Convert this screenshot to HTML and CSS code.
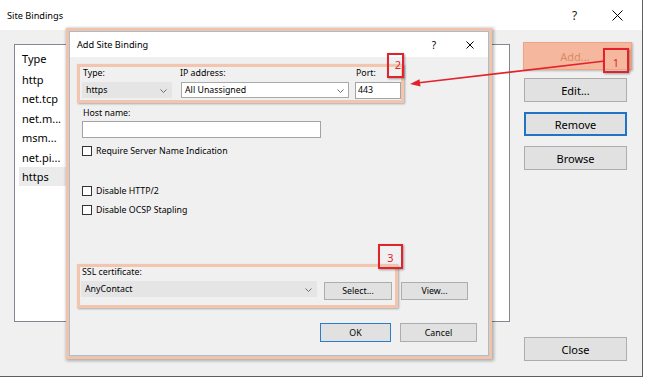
FILE: index.html
```html
<!DOCTYPE html>
<html>
<head>
<meta charset="utf-8">
<title>Site Bindings</title>
<link rel="stylesheet" href="styles.css">
</head>
<body>
<div class="screen">
  <div class="win">
    <div class="titlebar">
      <span class="title">Site Bindings</span>
      <span class="cap cap-help">?</span>
      <span class="cap cap-close"><svg width="11" height="11" viewBox="0 0 11 11"><path d="M0.5 0.5 L10.5 10.5 M10.5 0.5 L0.5 10.5" stroke="#000" stroke-width="1" fill="none"/></svg></span>
    </div>
    <div class="win-body">
      <div class="list">
        <div class="col">
          <div class="row head">Type</div>
          <div class="row">http</div>
          <div class="row">net.tcp</div>
          <div class="row">net.m...</div>
          <div class="row">msm...</div>
          <div class="row">net.pi...</div>
          <div class="row sel">https</div>
        </div>
      </div>
      <div class="btn-col">
        <button class="btn add">Add...</button>
        <button class="btn">Edit...</button>
        <button class="btn focus">Remove</button>
        <button class="btn">Browse</button>
        <button class="btn close">Close</button>
      </div>
    </div>
  </div>

  <div class="dialog">
    <div class="dlg-inner">
      <div class="dlg-title">
        <span class="title">Add Site Binding</span>
        <span class="dcap">?</span>
        <span class="dcap"><svg width="8" height="8" viewBox="0 0 8 8"><path d="M0.5 0.5 L7.5 7.5 M7.5 0.5 L0.5 7.5" stroke="#000" stroke-width="1" fill="none"/></svg></span>
      </div>
      <div class="dlg-body">
        <div class="hl hl-bind">
          <div class="field f-type">
            <div class="lbl">Type:</div>
            <div class="combo gray">https<svg class="chev" width="7" height="4" viewBox="0 0 7 4"><path d="M0.5 0.5 L3.5 3.5 L6.5 0.5" stroke="#6d6d6d" fill="none"/></svg></div>
          </div>
          <div class="field f-ip">
            <div class="lbl">IP address:</div>
            <div class="combo white">All Unassigned<svg class="chev" width="7" height="4" viewBox="0 0 7 4"><path d="M0.5 0.5 L3.5 3.5 L6.5 0.5" stroke="#6d6d6d" fill="none"/></svg></div>
          </div>
          <div class="field f-port">
            <div class="lbl">Port:</div>
            <div class="textbox port">443</div>
          </div>
        </div>

        <div class="lbl host-lbl">Host name:</div>
        <div class="textbox host"></div>

        <div class="check sni"><span class="box"></span><span>Require Server Name Indication</span></div>
        <div class="check http2"><span class="box"></span><span>Disable HTTP/2</span></div>
        <div class="check ocsp"><span class="box"></span><span>Disable OCSP Stapling</span></div>

        <div class="ssl-row">
          <div class="hl hl-ssl">
            <div class="lbl ssl-lbl">SSL certificate:</div>
            <div class="ssl-fields">
              <div class="combo gray cert">AnyContact<svg class="chev" width="7" height="4" viewBox="0 0 7 4"><path d="M0.5 0.5 L3.5 3.5 L6.5 0.5" stroke="#6d6d6d" fill="none"/></svg></div>
              <button class="btn sm select">Select...</button>
            </div>
          </div>
          <button class="btn sm view">View...</button>
        </div>

        <div class="dlg-actions">
          <button class="btn sm ok">OK</button>
          <button class="btn sm cancel">Cancel</button>
        </div>
      </div>
    </div>
  </div>

  <svg class="arrow" width="645" height="378" viewBox="0 0 645 378">
    <line x1="605" y1="61" x2="419" y2="82.8" stroke="#e2232b" stroke-width="1.6"/>
    <polygon points="410,84 420.5,86.6 419.5,79.2" fill="#e2232b"/>
  </svg>

  <div class="mark m1">1</div>
  <div class="mark m2">2</div>
  <div class="mark m3">3</div>
</div>
</body>
</html>
```

FILE: styles.css
```css
* { box-sizing: border-box; }
html, body { margin: 0; padding: 0; background: #fff; }
body { font-family: "Noto Sans", "Open Sans", sans-serif; color: #000; }

.screen { position: relative; width: 645px; height: 378px; overflow: hidden; background: #fff; }

/* outer window */
.win {
  width: 643px; height: 377px;
  border-right: 1px solid #5f5f5f; border-bottom: 1px solid #5f5f5f;
  background: #f0f0f0;
  display: flex; flex-direction: column;
}
.titlebar {
  height: 30px; flex: none; background: #fff;
  display: flex; align-items: center;
  padding: 0 3px 0 7px;
  font-size: 9.2px;
}
.titlebar .title { flex: 1; }
.cap { width: 43px; display: flex; justify-content: center; align-items: center; }
.cap-help { font-size: 12px; color: #222; }

.win-body { flex: 1; display: flex; padding: 14px 0 15px 14px; }
.list {
  width: 496px; height: 278px; flex: none;
  background: #fff; border: 1px solid #828790;
  padding: 2px 0 0 4px;
}
.col { width: 49px; }
.row { height: 19.4px; line-height: 19.4px; padding-left: 3px; font-size: 11px; white-space: nowrap; }
.row.head { height: 23px; line-height: 23px; }
.row.sel { background: #ebebeb; }

.btn-col { width: 103px; margin-left: 14px; display: flex; flex-direction: column; }
.btn {
  font-family: inherit; color: #000;
  background: #e1e1e1; border: 1px solid #adadad;
  padding: 0; margin: 0;
  display: flex; align-items: center; justify-content: center;
}
.btn-col .btn { height: 24px; width: 103px; font-size: 11px; margin-bottom: 10px; }
.btn-col .btn.add {
  width: 109px; height: 28px; margin: -2px 0 8px -1px;
  background: #f5b89e; border: 1px solid #eea487; color: #dc8a63;
  padding-right: 5px;
  box-shadow: 1px 1px 2px rgba(0,0,0,0.25);
}
.btn-col .btn.focus { border: 2px solid #1f74c6; }
.btn-col .btn.close { margin-top: auto; margin-bottom: 0; }

/* dialog */
.dialog {
  position: absolute; left: 66px; top: 28px;
  width: 426px; height: 331px;
  border: 3px solid #f2c3ab;
  box-shadow: 1px 1px 3px 1px rgba(0,0,0,0.28);
}
.dlg-inner {
  height: 100%; border: 1px solid #a8bdd3; background: #f0f0f0;
  display: flex; flex-direction: column;
}
.dlg-title {
  height: 25px; flex: none; background: #fff;
  display: flex; align-items: center;
  padding-left: 7px; font-size: 9.2px;
}
.dlg-title .title { flex: 1; }
.dcap { width: 36px; display: flex; justify-content: center; align-items: center; font-size: 10px; }

.dlg-body { flex: 1; display: flex; flex-direction: column; align-items: flex-start; font-size: 8.8px; }

.lbl { line-height: 12px; height: 12px; padding-left: 1px; white-space: nowrap; }

.hl {
  border: 3px solid #f3c5ae;
  box-shadow: 1px 1px 2px rgba(0,0,0,0.3);
}
.hl-bind { margin: 7px 0 0 7px; width: 327px; padding: 0 0 1px 2px; display: flex; }
.field { display: flex; flex-direction: column; }
.field .combo, .field .textbox { margin-top: 3px; }
.f-type { width: 90px; }
.f-ip { width: 168px; margin-left: 9px; }
.f-ip .lbl { padding-left: 0; margin-left: -1px; }
.f-port { width: 46px; margin-left: 6px; }

.combo {
  position: relative; height: 16px; line-height: 14px;
  padding-left: 3px; border: 1px solid #e5e5e5; white-space: nowrap;
}
.combo.gray { background: #e5e5e5; }
.combo.white { background: #fff; border-color: #a9a9a9; }
.chev { position: absolute; right: 4px; top: 6px; }

.textbox { height: 17px; line-height: 15px; padding-left: 2px; background: #fff; border: 1px solid #a3a3a3; }

.host-lbl { margin: 4px 0 0 12px; }
.host { width: 239px; margin: 2px 0 0 12px; }

.check { display: flex; align-items: center; height: 10px; margin-left: 12px; white-space: nowrap; }
.check .box { width: 10px; height: 10px; border: 1px solid #333; background: #fff; margin-right: 4px; flex: none; }
.sni { margin-top: 8px; }
.http2 { margin-top: 30px; }
.ocsp { margin-top: 9px; }

.ssl-row { display: flex; align-items: flex-start; margin: 49px 0 0 7px; }
.hl-ssl { padding: 0 3px 5px 1px; }
.ssl-lbl { height: 10px; line-height: 10px; }
.ssl-fields { display: flex; align-items: flex-start; margin-top: 4px; }
.cert { width: 236px; }
.btn.sm { font-size: 8.8px; height: 18px; }
.select { width: 68px; margin: 1px 0 0 7px; }
.view { width: 67px; margin: 18px 0 0 3px; }

.dlg-actions { align-self: stretch; display: flex; justify-content: flex-end; margin-top: 15px; padding-right: 11px; }
.btn.ok { width: 71px; height: 19px; border-color: #2a7ccc; }
.btn.cancel { width: 77px; height: 19px; margin-left: 9px; }

/* annotations */
.arrow { position: absolute; left: 0; top: 0; }
.mark {
  position: absolute;
  border: 2px solid #e2232b; color: #e2232b;
  font-size: 11px; text-align: center;
  box-shadow: 1px 1px 2px rgba(0,0,0,0.35);
}
.m1 { left: 603px; top: 48px; width: 26px; height: 25px; line-height: 21px; padding-top: 2px; }
.m2 { left: 387px; top: 53px; width: 17px; height: 25px; line-height: 20px; text-align: right; padding-right: 1px; }
.m3 { left: 378px; top: 244px; width: 25px; height: 25px; line-height: 21px; padding-top: 1px; }
```
